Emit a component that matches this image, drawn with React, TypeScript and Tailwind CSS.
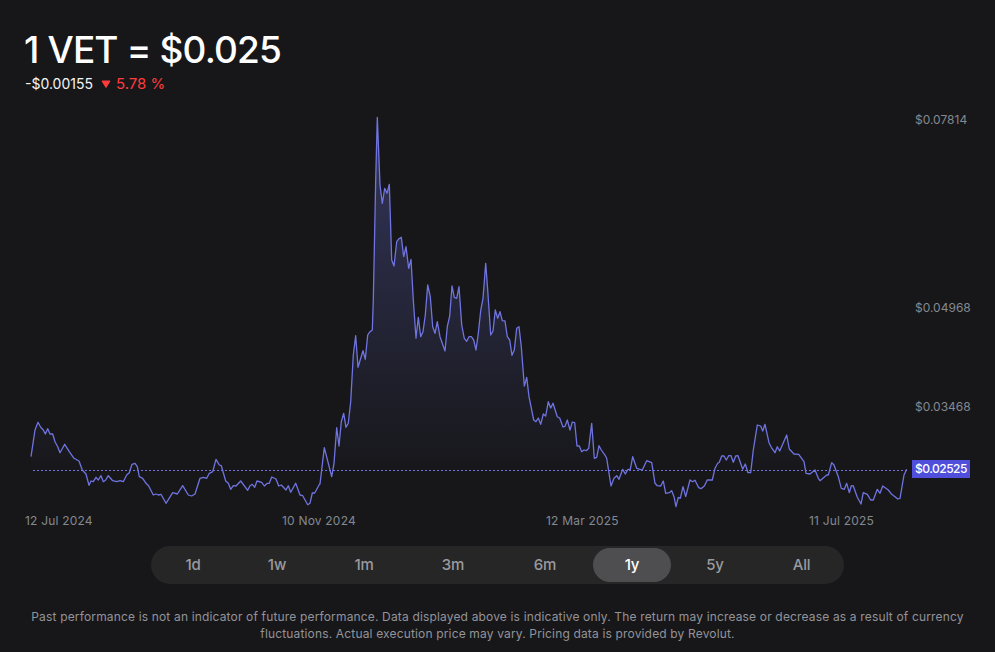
const ranges = ["1d", "1w", "1m", "3m", "6m", "1y", "5y", "All"];

const xLabels = ["12 Jul 2024", "10 Nov 2024", "12 Mar 2025", "11 Jul 2025"];

const yLabels = [
  { label: "$0.07814", top: 7 },
  { label: "$0.04968", top: 195 },
  { label: "$0.03468", top: 294 },
];

type Pt = [number, number];

// traced from the chart, each run in its own crop coords (3x)
const crop = (pts: Pt[], ox: number, oy: number): Pt[] => pts.map(([x, y]) => [ox + x / 3, oy + y / 3]);

const line: Pt[] = [
  ...crop(
    [[33,170],[45,90],[54,67],[62,82],[70,90],[76,102],[83,86],[90,102],[98,102],[105,125],[113,140],[120,158],[134,133],[148,155],[162,175],[177,183],[187,210],[198,222],[207,256],[213,243],[220,245],[228,232],[235,240],[243,227],[250,245],[257,240],[265,227],[278,242],[290,245],[300,242],[310,245],[320,225],[328,218],[336,193],[345,190],[352,200],[358,230],[368,235],[378,250],[386,258],[400,285],[408,282],[415,285],[423,283],[438,310],[458,278],[472,282],[488,257],[505,285],[515,288],[525,282],[540,235],[550,232],[560,235],[568,220],[578,215],[588,178],[598,195],[604,197],[617,243],[625,250],[632,268],[640,257],[648,258],[662,243],[683,271],[690,257],[697,253],[704,262],[711,243],[725,247],[733,258],[742,250],[748,250],[755,231],[768,237],[776,258],[784,255],[798,270],[805,257],[812,277],[827,250],[840,285],[848,287],[863,314],[870,310],[877,279],[884,279],[900,250]],
    20,
    400,
  ),
  ...crop(
    [[0,612],[13,503],[35,590],[42,550],[50,443],[57,498],[64,425],[71,400],[78,442],[85,430],[92,365],[100,225],[107,167],[114,262],[129,212],[136,238],[143,165],[150,155],[157,150]],
    320,
    280,
  ),
  ...crop(
    [[160,600],[167,240],[172,52],[180,255],[187,310],[194,265],[201,280],[208,253],[215,480],[222,498],[230,425],[237,416],[244,412],[251,470],[258,440],[266,505],[273,478],[280,600]],
    320,
    100,
  ),
  ...crop(
    [[288,175],[295,112],[302,170],[309,155],[316,105],[323,15],[331,50],[338,140],[345,160],[352,125],[360,170],[375,213],[382,140],[389,108],[396,18],[403,52],[410,55],[417,20],[425,135],[433,175],[440,184],[447,170],[454,170],[461,180],[468,210],[475,160],[482,92],[489,55],[497,-50],[503,30],[512,165],[519,153],[526,90],[533,115],[540,95],[547,122],[555,123],[562,170],[569,180],[576,226],[583,210],[590,145],[597,140],[604,200],[613,318],[620,292],[627,350],[641,420],[648,425],[655,414],[662,433],[670,402],[677,408],[685,365],[692,384],[699,370],[712,410],[719,414],[729,441],[735,439],[742,420],[750,450],[757,426],[764,428],[771,498],[778,498],[785,515],[792,510],[799,512],[806,505],[815,430],[823,535],[830,532],[837,497],[844,510],[856,527]],
    320,
    280,
  ),
  ...crop(
    [[20,175],[33,258],[42,235],[50,227],[57,238],[68,208],[76,222],[84,208],[91,208],[98,170],[110,205],[127,210],[140,182],[155,188],[165,250],[172,257],[182,258],[190,243],[197,280],[208,278],[215,272],[222,290],[228,320],[235,292],[241,295],[249,260],[257,290],[270,240],[278,245],[285,241],[296,263],[303,266],[313,258],[322,240],[337,240],[345,205],[353,190],[358,187],[365,168],[372,168],[379,180],[386,167],[393,167],[400,187],[407,168],[414,167],[428,208],[436,192],[444,218],[452,218],[460,150],[472,75],[482,78],[488,93],[495,73],[507,128],[514,142],[525,158],[532,140],[539,153],[560,105],[568,147],[582,162],[596,163],[612,185],[618,220],[630,222],[645,210],[655,235],[660,242],[680,225],[685,225],[695,188],[702,195],[715,230],[724,265],[733,268],[740,250],[748,278],[754,257],[760,258],[772,292],[783,312],[790,278],[802,283],[812,300],[820,300],[832,268],[840,280],[848,258],[865,270],[875,283],[885,290],[893,297],[900,295],[912,225],[920,208]],
    600,
    400,
  ),
];

const linePath = line.map(([x, y]) => `${x.toFixed(1)},${y.toFixed(1)}`).join(" ");
const areaPath = `${linePath} 907,505 31,505`;

function PriceChart() {
  return (
    <svg className="block h-[425px] w-[995px]" viewBox="0 105 995 425">
      <defs>
        <linearGradient id="area" gradientUnits="userSpaceOnUse" x1="0" y1="117" x2="0" y2="475">
          <stop offset="0" stopColor="#6f74e0" stopOpacity="0.33" />
          <stop offset="1" stopColor="#6f74e0" stopOpacity="0" />
        </linearGradient>
      </defs>
      <polygon points={areaPath} fill="url(#area)" />
      <line x1="33" y1="470.5" x2="907" y2="470.5" stroke="#6f74e0" strokeWidth="1" strokeDasharray="2 2" />
      <polyline points={linePath} fill="none" stroke="#6f74e0" strokeWidth="1.3" strokeLinejoin="round" />
    </svg>
  );
}

export default function App() {
  return (
    <div className="h-[652px] w-[995px] overflow-hidden bg-[#17171a] font-['Inter',sans-serif]">
      <div className="px-6 pt-[28px]">
        <h1 className="text-[37px] leading-[44px] font-medium tracking-[-0.85px] text-white">1 VET = $0.025</h1>
        <div className="mt-[2px] flex h-[20px] items-center pl-px text-sm">
          <span className="text-[#f4f4f5]">-$0.00155</span>
          <svg className="mr-[5px] ml-2 h-[8px] w-[10px]" viewBox="0 0 10 8">
            <path d="M1 1h8L5 7.5z" fill="#ff3b3b" stroke="#ff3b3b" strokeLinejoin="round" />
          </svg>
          <span className="text-[15px] text-[#ff3b3b]">5.78 %</span>
        </div>
      </div>

      <div className="relative mt-[11px] h-[425px]">
        <PriceChart />
        {yLabels.map((item) => (
          <span key={item.label} className="absolute left-[915px] text-xs leading-4 text-[#83898f]" style={{ top: item.top }}>
            {item.label}
          </span>
        ))}
        <span className="absolute top-[355px] left-[912px] bg-[#4f4fdc] px-[3px] text-xs leading-[18px] font-medium tracking-[-0.5px] text-white">
          $0.02525
        </span>
        <div className="absolute top-[408px] left-[25px] grid grid-cols-[257px_264px_263px_auto] text-xs leading-4 tracking-[0.2px] text-[#83898f]">
          {xLabels.map((label) => (
            <span key={label}>{label}</span>
          ))}
        </div>
      </div>

      <div className="mx-[151px] mt-[16px] grid h-[38px] grid-cols-[84px_84px_90px_88px_96px_78px_88px_85px] items-center rounded-full bg-[#262627]">
        {ranges.map((range) => (
          <button
            key={range}
            className={
              range === "1y"
                ? "h-[34px] rounded-full bg-[#4e4e50] text-[15px] font-medium tracking-[-0.2px] text-white"
                : "h-[34px] rounded-full text-[15px] font-medium tracking-[-0.2px] text-[#9a9a9f]"
            }
          >
            {range}
          </button>
        ))}
      </div>

      <p className="mx-auto mt-[24px] w-[950px] text-center text-xs leading-[17px] tracking-[0.16px] text-[#939398]">
        Past performance is not an indicator of future performance. Data displayed above is indicative only. The return
        may increase or decrease as a result of currency fluctuations. Actual execution price may vary. Pricing data is
        provided by Revolut.
      </p>
    </div>
  );
}
